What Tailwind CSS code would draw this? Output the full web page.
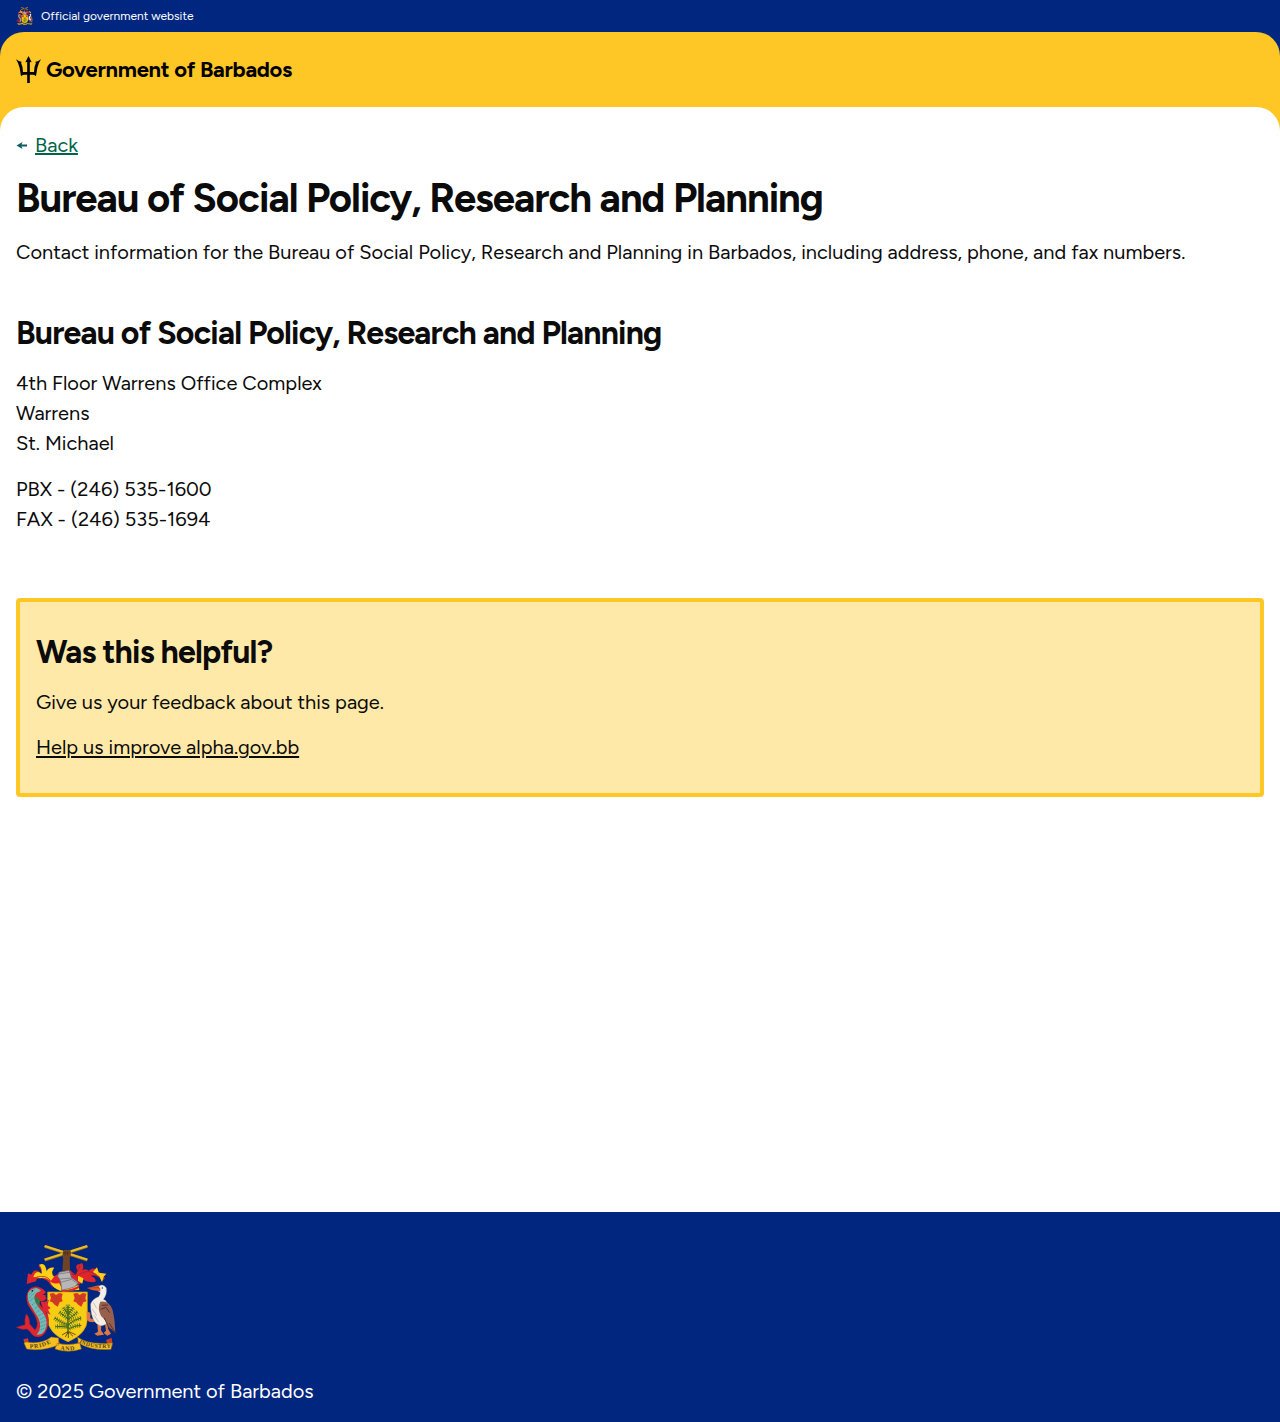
<!DOCTYPE html>
<html lang="en">
<head>
<meta charset="utf-8">
<title>Bureau of Social Policy, Research and Planning</title>
<script src="https://cdn.jsdelivr.net/npm/@tailwindcss/browser@4"></script>
</head>
<body class="flex min-h-[1422px] flex-col bg-white font-[Figtree,Lato,sans-serif] text-xl leading-[30px] text-[#0b0b0b]">
<svg class="hidden" aria-hidden="true">
  <symbol id="arms" viewBox="48 36 300 324">
    <!-- crossed canes and hand -->
    <path d="M187 116L190 77L209 77L210 116Z" fill="#704326"/>
    <path d="M134 43L262 84M134 84L262 43" stroke="#97731a" stroke-width="9"/>
    <path d="M134 42L262 83M134 83L262 42" stroke="#edbc1e" stroke-width="6"/>
    <path d="M188 76Q186 60 192 54L211 54Q216 66 209 76V80H190Z" fill="#704326"/>
    <path d="M196 57L195 71M203 57L202 71M189 63L210 63" stroke="#3c2516" stroke-width="1.5"/>
    <!-- mantling -->
    <path d="M80 156L84 124L94 128Q100 112 115 117L125 126Q125 112 115 101Q128 94 134 109L138 120Q145 105 158 107Q151 115 157 126Q160 137 172 127L185 118L211 115L226 130Q236 120 229 108Q228 96 238 97L246 93Q254 104 246 118Q252 107 266 116Q280 104 291 113L315 139Q305 154 300 138Q283 126 273 132Q290 139 286 150Q262 152 250 144Q242 160 230 158L185 167Q158 173 148 153Q140 142 124 139Q108 138 108 148Z" fill="#df252b"/>
    <path d="M104 125Q114 115 125 126Q127 107 117 98Q133 90 138 109L140 118Q147 105 163 107Q150 123 162 134L153 146Q133 133 120 139Q112 135 100 135ZM278 121L291 106L296 122L319 125L311 134L306 151L298 133ZM234 131L250 139L247 155L234 146ZM150 148Q160 158 177 153L184 165L236 160L238 174L180 176Q156 168 150 148Z" fill="#ffd116"/>
    <path d="M110 135Q139 128 151 145M216 128Q236 122 240 100M231 134Q247 117 268 119Q280 120 290 128" fill="none" stroke="#921e25" stroke-width="2"/>
    <!-- helmet -->
    <path d="M177 121L207 115L215 137L234 151Q233 168 185 174Q184 145 173 133Z" fill="#b7b7ba" stroke="#626269" stroke-width="2"/>
    <path d="M176 126L208 121M180 141L216 138M182 151L215 142L233 155" fill="none" stroke="#6c6c72" stroke-width="2"/>
    <path d="M184 174Q215 176 238 160L237 168Q215 180 186 180Z" fill="#df252b"/>
    <!-- shield -->
    <path d="M143 180H262V260Q262 305 204 329Q143 304 143 260Z" fill="#f8cb14" stroke="#d09b16" stroke-width="2"/>
    <g id="flower" fill="#dc3426"><path d="M149 185L161 183L168 189L177 183L188 185L185 198L188 208L179 211L173 224L164 218L157 211L149 208L153 198Z"/><path d="M154 192L166 199L181 190M160 208L177 202M168 189L169 217" fill="none" stroke="#98521d" stroke-width="2"/></g>
    <use href="#flower" x="71"/>
    <path d="M204 222V305" stroke="#475320" stroke-width="4"/>
    <g fill="none" stroke="#475320" stroke-width="3"><path d="M206 286Q188 282 166 284M206 280Q184 272 164 258M206 262L178 240M206 250L190 227M206 246L220 226M206 262L232 240M206 277Q222 262 244 258M207 290Q224 280 244 280"/></g>
    <path d="M205 298L186 309M204 300L196 315M206 300L219 313M205 300L205 318M207 299L227 308" fill="none" stroke="#4a3a18" stroke-width="2.500"/>
    <path d="M206 286Q188 282 166 284M206 280Q184 272 164 258M206 262L178 240M206 250L190 227M206 246L220 226M206 262L232 240M206 277Q222 262 244 258M207 290Q224 280 244 280M204 218V246" fill="none" stroke="#3b7526" stroke-width="13" stroke-dasharray="2.500 4"/>
    <!-- dolphin -->
    <path d="M82 182Q90 164 107 164Q124 164 137 180L127 186L140 198Q130 214 115 205Q117 217 131 232Q149 250 145 276Q138 312 116 315Q98 315 91 300L81 291Q64 295 49 286L75 278Q73 258 79 246Q90 256 89 276L105 294Q119 278 105 251L84 219Q77 202 82 182Z" fill="#df252f" stroke="#8d2431" stroke-width="1.5"/>
    <path d="M84 184Q91 169 110 168L128 178L113 181Q101 188 104 203Q110 221 128 240Q144 264 139 285Q132 310 110 308Q128 286 115 258L96 227Q80 207 84 184Z" fill="#71bbb7"/>
    <path d="M88 188L103 173M88 198L105 181M90 208L104 193M96 219L109 209M104 230L119 220M109 241L126 230M116 251L133 242M120 262L138 253M122 272L141 264M121 284L141 276M117 295L138 287" stroke="#307c84" stroke-width="2" stroke-dasharray="4 2"/>
    <path d="M111 185L128 170L137 182L127 189L138 190L132 200L117 205L109 198ZM122 210L134 209L147 203L142 220L152 228L144 233L152 248L140 242L130 234Z" fill="#df252f"/>
    <path d="M106 191L121 206L115 222L104 203Z" fill="#268244"/>
    <circle cx="97" cy="176" r="2.5" fill="#172b32"/>
    <!-- pelican -->
    <path d="M260 238L271 242L271 259L289 264L280 271L267 269L260 262ZM292 279L304 279L303 295L312 308L292 311L283 305L294 299ZM315 275L323 277L324 290L333 305L322 311L311 303L318 296Z" fill="#dc7745"/>
    <path d="M294 164Q309 153 319 168Q322 188 310 202Q325 207 326 235L321 274Q302 290 284 269Q271 249 272 216Q277 201 296 194Q306 180 295 178Z" fill="#f4eee5" stroke="#aba0a0"/>
    <path d="M301 209Q328 205 337 232Q344 254 346 302L327 288Q322 269 303 252Q291 229 301 209Z" fill="#98604c"/>
    <path d="M328 274L346 302L326 286L313 258M302 232L318 226L329 242M306 220L324 219" fill="none" stroke="#4e3433" stroke-width="3"/>
    <path d="M262 168L296 160L302 178L275 174Z" fill="#e65b24"/><path d="M262 168L297 167L301 172" fill="none" stroke="#8d4029" stroke-width="2"/>
    <circle cx="307" cy="168" r="2" fill="#222"/><path d="M280 211L290 229M276 230L290 250M282 250L296 270" stroke="#b5aaa3" stroke-width="2"/>
    <!-- motto scroll -->
    <path d="M70 322L84 319L87 336L74 335ZM173 325L182 335L169 341ZM236 321L246 334L230 341ZM318 324L335 317L338 341L324 342Z" fill="#ca3e23"/>
    <path d="M78 330Q125 338 154 315L176 318L176 339Q126 359 80 351L72 333ZM171 334Q203 342 239 333L244 351Q204 365 165 351ZM233 316Q267 340 337 333L333 352Q272 357 235 332Z" fill="#f5bf20" stroke="#9b6b1b" stroke-width="1.5"/>
    <path id="motto-left" d="M89 349Q126 350 160 329" fill="none"/><path id="motto-mid" d="M181 354Q206 358 238 351" fill="none"/><path id="motto-right" d="M237 332Q275 352 336 347" fill="none"/>
    <g fill="#50421b" font-family="Liberation Serif" font-weight="700" font-size="18"><text textLength="67"><textPath href="#motto-left">PRIDE</textPath></text><text textLength="43"><textPath href="#motto-mid">AND</textPath></text><text textLength="98" font-size="17"><textPath href="#motto-right">INDUSTRY</textPath></text></g>
  </symbol>
</svg>

<header class="bg-[#00267f]">
  <div class="flex h-8 items-center gap-2 px-4 text-xs leading-4 text-white">
    <svg class="h-[18px] w-[17px]"><use href="#arms"/></svg>
    <span>Official government website</span>
  </div>
</header>
<div class="bg-[#00267f]">
  <div class="flex h-[99px] items-start rounded-t-3xl bg-[#ffc726] px-4 pt-6">
    <a class="flex items-start gap-[5px] text-black">
      <svg class="h-[27px] w-[25px]" viewBox="0 0 75 81" fill="currentColor"><path d="M37.500 0L47 19L41.500 18V48H54Q54 32 60 20L57 18Q67 16 75 10Q67 22 64 36L60 61Q57 56 51 56H41.500V81H33.500V56H24Q18 56 15 61L11 36Q8 22 0 10Q8 16 18 18L15 20Q21 32 21 48H33.500V18L28 19Z"/></svg>
      <span class="text-[22px] leading-[27px] font-bold tracking-[-0.3px]">Government of Barbados</span>
    </a>
  </div>
</div>
<main class="-mt-6 flex flex-1 flex-col rounded-t-3xl bg-white px-4 pt-[23px]">
  <a class="flex items-center gap-2 text-[#00654a]">
    <svg class="h-[9px] w-[11px]" viewBox="0 0 11 9" fill="#0e5f64"><path d="M0.500 4.500L6.500 1L5.500 3.500H11V5.500H5.500L6.500 8Z"/></svg>
    <span class="underline decoration-2 underline-offset-[1px]">Back</span>
  </a>
  <h1 class="mt-[13px] text-[40px] leading-[50px] font-bold tracking-tight">Bureau of Social Policy, Research and Planning</h1>
  <p class="mt-3.5">Contact information for the Bureau of Social Policy, Research and Planning in Barbados, including address, phone, and fax numbers.</p>
  <h2 class="mt-[46px] text-[32px] leading-10 font-bold tracking-tight">Bureau of Social Policy, Research and Planning</h2>
  <p class="mt-[15px]">4th Floor Warrens Office Complex<br>Warrens<br>St. Michael</p>
  <p class="mt-4">PBX - (246) 535-1600<br>FAX - (246) 535-1694</p>
  <section class="mt-16 h-[199px] rounded-sm border-4 border-[#ffc726] bg-[#ffe9a8] px-4 pt-[30px]">
    <h2 class="text-[32px] leading-10 font-bold tracking-tight">Was this helpful?</h2>
    <p class="mt-[15px]">Give us your feedback about this page.</p>
    <p class="mt-[15px]"><a class="underline decoration-2 underline-offset-2">Help us improve alpha.gov.bb</a></p>
  </section>
</main>
<footer class="h-[210px] bg-[#00267f] px-4 pt-8 text-white">
  <svg class="h-[108px] w-[100px]"><use href="#arms"/></svg>
  <p class="mt-6">© 2025 Government of Barbados</p>
</footer>
</body>
</html>
